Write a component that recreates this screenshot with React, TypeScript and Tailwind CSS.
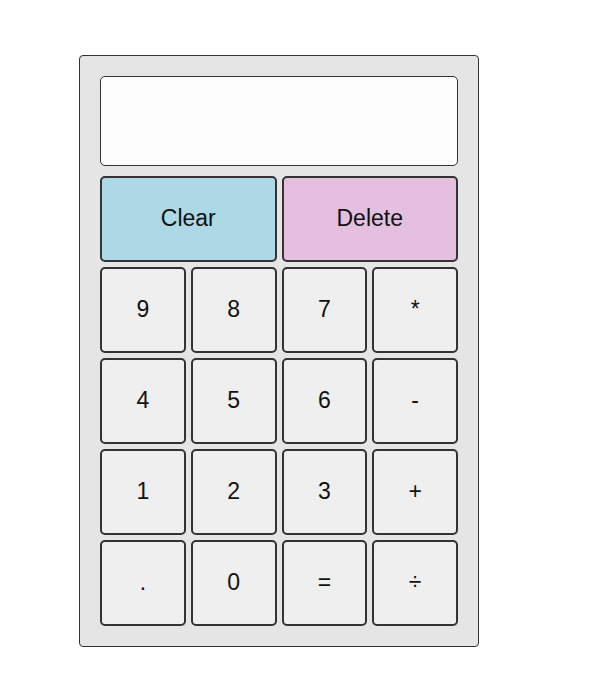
import React from "react";

const keys = ["9", "8", "7", "*", "4", "5", "6", "-", "1", "2", "3", "+", ".", "0", "=", "÷"];

export default function App() {
  return (
    <div className="min-h-[699px] bg-white pl-[79px] pt-[55px]" style={{ fontFamily: '"Liberation Sans", Arial, sans-serif' }}>
      <div className="w-[400px] rounded-[4px] border border-[#333] bg-[#e5e5e5] p-5">
        <div className="h-[90px] rounded-[5px] border border-[#333] bg-[#fcfcfc]" />
        <div className="mt-[10px] grid grid-cols-4 auto-rows-[86px] gap-[5px]">
          <button className="col-span-2 rounded-[5px] border-2 border-[#333] bg-[#add8e6] pb-[1px] text-[23px] text-[#111]">
            Clear
          </button>
          <button className="col-span-2 rounded-[5px] border-2 border-[#333] bg-[#e4bfdf] pb-[1px] text-[23px] text-[#111]">
            Delete
          </button>
          {keys.map((k) => (
            <button key={k} className="rounded-[5px] border-2 border-[#333] bg-[#efefef] pb-[1px] text-[23px] text-[#111]">
              {k}
            </button>
          ))}
        </div>
      </div>
    </div>
  );
}
